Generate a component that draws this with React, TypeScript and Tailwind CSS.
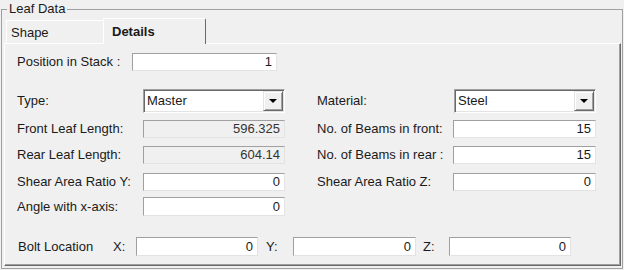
const inputCls =
  "h-full bg-white border border-t-[#a0a0a0] border-l-[#a0a0a0] border-r-[#e3e3e3] border-b-[#e3e3e3] flex items-center justify-end pr-[4px]";
const readCls =
  "h-full bg-[#f0f0f0] border border-t-[#a0a0a0] border-l-[#a0a0a0] border-r-[#e3e3e3] border-b-[#e3e3e3] flex items-center justify-end pr-[4px] text-[#333]";

const Field = ({ value, w, readOnly }: { value: string; w: string; readOnly?: boolean }) => (
  <div className={`${readOnly ? readCls : inputCls} ${w}`}>{value}</div>
);

const Combo = ({ value }: { value: string }) => (
  <div className="flex h-full w-[142px] border border-t-[#a0a0a0] border-l-[#a0a0a0] border-r-white border-b-white bg-white shadow-[inset_1px_1px_0_#696969,inset_-1px_-1px_0_#e3e3e3]">
    <div className="flex flex-1 items-center pl-[3px]">{value}</div>
    <div className="my-[1px] mr-[1px] flex w-[20px] items-center justify-center border border-t-[#e3e3e3] border-l-[#e3e3e3] border-r-[#696969] border-b-[#696969] bg-[#f0f0f0] shadow-[inset_1px_1px_0_#fff,inset_-1px_-1px_0_#a0a0a0]">
      <svg width="8" height="4" viewBox="0 0 8 4">
        <path d="M0 0H8L4 4Z" fill="#000" />
      </svg>
    </div>
  </div>
);

const App = () => {
  return (
    <div
      className="h-[270px] w-[624px] overflow-hidden bg-[#f0f0f0] text-[13px] text-[#1a1a1a]"
      style={{ fontFamily: '"Liberation Sans", Arial, sans-serif' }}
    >
      <fieldset className="ml-[1px] h-[269px] w-[622px] border border-[#a0a0a0] pl-[2px] pr-[1px]">
        <legend className="ml-[3px] px-[2px] leading-[18px]">Leaf Data</legend>

        {/* tabs */}
        <div className="flex h-[25px] items-end pl-[2px]">
          <div className="flex h-[23px] w-[99px] items-center rounded-tr-[2px] border-l border-t border-r border-l-white border-t-white border-r-[#696969] pl-[4px] pt-[2px]">
            Shape
          </div>
          <div className="relative z-10 -ml-[2px] flex h-[26px] w-[103px] items-start self-start rounded-tr-[2px] border-l border-t border-r border-l-white border-t-white border-r-[#696969] bg-[#f0f0f0] pl-[8px] pt-[3px] font-bold">
            Details
          </div>
        </div>

        {/* panel */}
        <div className="h-[223px] border border-l-white border-t-white border-r-[#696969] border-b-[#696969] pl-[12px] shadow-[inset_-1px_-1px_0_#a0a0a0]">
          <div className="mt-[9px] flex h-[18px] items-center">
            <span className="w-[115px]">Position in Stack :</span>
            <Field value="1" w="w-[145px]" />
          </div>

          <div className="mt-[18px] flex h-[24px] items-center">
            <span className="w-[126px]">Type:</span>
            <Combo value="Master" />
            <span className="ml-[32px] w-[137px]">Material:</span>
            <Combo value="Steel" />
          </div>

          <div className="mt-[7px] flex h-[18px] items-center">
            <span className="w-[126px]">Front Leaf Length:</span>
            <Field value="596.325" w="w-[142px]" readOnly />
            <span className="ml-[32px] w-[136px]">No. of Beams in front:</span>
            <Field value="15" w="w-[143px]" />
          </div>

          <div className="mt-[8px] flex h-[18px] items-center">
            <span className="w-[126px]">Rear Leaf Length:</span>
            <Field value="604.14" w="w-[142px]" readOnly />
            <span className="ml-[32px] w-[136px]">No. of Beams in rear :</span>
            <Field value="15" w="w-[143px]" />
          </div>

          <div className="mt-[9px] flex h-[18px] items-center">
            <span className="w-[126px]">Shear Area Ratio Y:</span>
            <Field value="0" w="w-[142px]" />
            <span className="ml-[32px] w-[136px]">Shear Area Ratio Z:</span>
            <Field value="0" w="w-[143px]" />
          </div>

          <div className="mt-[6px] flex h-[19px] items-center">
            <span className="w-[126px]">Angle with x-axis:</span>
            <Field value="0" w="w-[142px]" />
          </div>

          <div className="mt-[21px] flex h-[19px] items-center pl-[1px]">
            <span className="w-[95px]">Bolt Location</span>
            <span className="w-[23px]">X:</span>
            <Field value="0" w="w-[122px]" />
            <span className="ml-[8px] w-[27px]">Y:</span>
            <Field value="0" w="w-[123px]" />
            <span className="ml-[7px] w-[26px]">Z:</span>
            <Field value="0" w="w-[122px]" />
          </div>
        </div>
      </fieldset>
    </div>
  );
};

export default App;
